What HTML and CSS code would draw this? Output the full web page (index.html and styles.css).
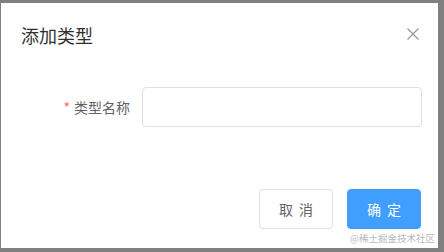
FILE: index.html
```html
<!doctype html>
<html lang="zh-CN">
  <head>
    <meta charset="UTF-8" />
    <meta name="viewport" content="width=device-width, initial-scale=1.0" />
    <title>添加类型</title>
    <link rel="stylesheet" href="styles.css">
  </head>
  <body>
    <div class="dialog">
      <div class="dialog-header">
        <span class="dialog-title">添加类型</span>
        <button class="dialog-close" aria-label="关闭">
          <svg width="12" height="12" viewBox="0 0 12 12">
            <path d="M0.5 0.5 L11.5 11.5 M11.5 0.5 L0.5 11.5" stroke="#909399" stroke-width="1.1" fill="none" />
          </svg>
        </button>
      </div>

      <div class="dialog-body">
        <div class="form-item">
          <label class="form-label"><span class="required">*</span>类型名称</label>
          <input type="text" class="form-input" />
        </div>
      </div>

      <div class="dialog-footer">
        <button class="btn">取 消</button>
        <button class="btn btn-primary">确 定</button>
      </div>

      <div class="watermark">@稀土掘金技术社区</div>
    </div>
  </body>
</html>
```

FILE: styles.css
```css
html, body {
  margin: 0;
  height: 100%;
}

body {
  background-color: #808080;
  font-family: "Noto Sans CJK SC", "Noto Sans", sans-serif;
  padding: 3px 6px 4px 1px;
  box-sizing: border-box;
}

.dialog {
  position: relative;
  background-color: #fff;
  height: 100%;
  box-sizing: border-box;
}

.dialog-header {
  padding: 20px 20px 10px;
}

.dialog-title {
  display: block;
  font-size: 18px;
  line-height: 24px;
  color: #303133;
}

.dialog-close {
  position: absolute;
  top: 25px;
  right: 19px;
  padding: 0;
  border: none;
  background: none;
  width: 12px;
  height: 12px;
  cursor: pointer;
}

.dialog-close svg {
  display: block;
}

.dialog-body {
  padding: 30px 16px 30px 20px;
}

.form-item {
  display: flex;
  align-items: center;
}

.form-label {
  width: 121px;
  padding-right: 12px;
  box-sizing: border-box;
  text-align: right;
  font-size: 14px;
  color: #606266;
}

.required {
  color: #f56c6c;
  margin-right: 4px;
}

.form-input {
  flex: 1;
  height: 40px;
  box-sizing: border-box;
  border: 1px solid #dcdfe6;
  border-radius: 4px;
  padding: 0 15px;
  outline: none;
}

.dialog-footer {
  display: flex;
  justify-content: flex-end;
  gap: 14px;
  padding: 32px 17px 20px 20px;
}

.btn {
  width: 74px;
  height: 40px;
  border: 1px solid #dcdfe6;
  border-radius: 4px;
  background-color: #fff;
  color: #606266;
  font-family: inherit;
  font-size: 14px;
  word-spacing: 3px;
  cursor: pointer;
}

.btn-primary {
  background-color: #409eff;
  border-color: #409eff;
  color: #fff;
}

.watermark {
  position: absolute;
  right: 3px;
  bottom: 4px;
  font-size: 9.5px;
  line-height: 12px;
  color: #b8b8b8;
}
```
